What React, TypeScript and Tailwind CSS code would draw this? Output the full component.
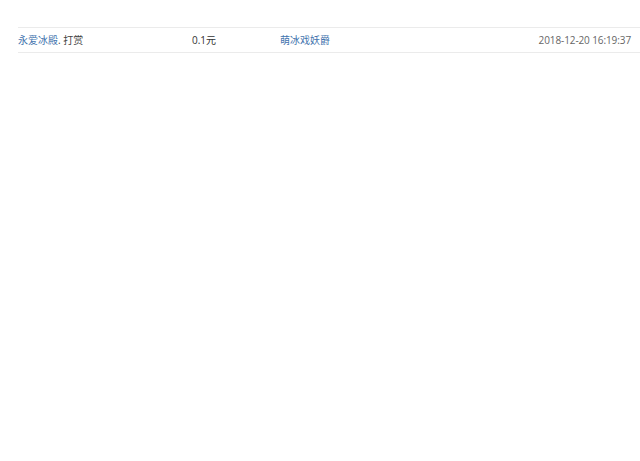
export default function App() {
  return (
    <div className="w-[640px] h-[461px] bg-white pt-[27px] pl-[18px] overflow-hidden" style={{ fontFamily: '"Open Sans", "Noto Sans CJK SC", sans-serif' }}>
      <div className="flex items-center h-[26px] border-t border-b border-[#ebebeb] text-[10px] pr-[9px]">
        <div className="w-[174px] shrink-0">
          <span className="text-[#3f73ae]">永爱冰殿</span>
          <span className="text-[#444444]">. 打赏</span>
        </div>
        <div className="w-[88px] shrink-0 text-[#333333]">0.1元</div>
        <div className="text-[#3f73ae]">萌冰戏妖爵</div>
        <div className="ml-auto text-[#666666] tracking-[-0.1px]">2018-12-20 16:19:37</div>
      </div>
    </div>
  );
}
